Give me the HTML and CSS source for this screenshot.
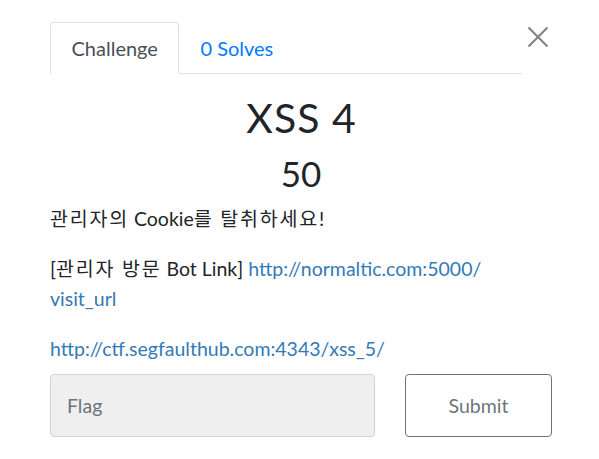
FILE: index.html
```html
<!DOCTYPE html>
<html lang="ko">
<head>
<meta charset="utf-8">
<link rel="stylesheet" href="styles.css">
</head>
<body>
<div class="modal">
  <div class="header">
    <ul class="tabs">
      <li class="tab active">Challenge</li>
      <li class="tab"><a href="#">0 Solves</a></li>
    </ul>
    <button class="close" aria-label="Close">
      <svg width="20" height="20" viewBox="0 0 20 20"><path d="M0.5 0.5 L19.5 19.5 M19.5 0.5 L0.5 19.5" stroke="#858585" stroke-width="2.2" fill="none"/></svg>
    </button>
  </div>
  <h1 class="title">XSS 4</h1>
  <h2 class="value">50</h2>
  <div class="desc">
    <p><span class="ko">관리자의</span> Cookie<span class="ko">를 탈취하세요</span>!</p>
    <p>[<span class="ko">관리자 방문</span> Bot Link] <a href="#">http://normaltic.com:5000/<br>visit_url</a></p>
    <p><a href="#">http://ctf.segfaulthub.com:4343/xss_5/</a></p>
  </div>
  <form class="form">
    <input class="flag" type="text" placeholder="Flag">
    <button class="submit" type="button">Submit</button>
  </form>
</div>
</body>
</html>
```
FILE: styles.css
```css
* { box-sizing: border-box; }
body {
  margin: 0;
  background: #fff;
  font-family: Lato, "Noto Sans CJK KR", sans-serif;
  color: #212529;
}
.modal {
  width: 502px;
  margin-left: 50px;
  padding-top: 22px;
}
.header {
  display: flex;
  align-items: flex-start;
}
.tabs {
  list-style: none;
  margin: 0;
  padding: 0;
  width: 472px;
  display: flex;
  border-bottom: 1px solid #dee2e6;
}
.tab {
  font-size: 20px;
  line-height: 30px;
  padding: 10px 20px 10px 20.5px;
  margin-bottom: -1px;
  border: 1px solid transparent;
  border-radius: 4px 4px 0 0;
}
.tab.active {
  color: #495057;
  border-color: #dee2e6 #dee2e6 #fff;
  background: #fff;
}
.tab a {
  color: #007bff;
  text-decoration: none;
}
.close {
  margin: 5px 0 0 6px;
  padding: 0;
  border: 0;
  background: none;
  width: 20px;
  height: 20px;
}
.close svg { display: block; }
.title {
  margin: 19px 0 0;
  text-align: center;
  font-size: 41px;
  font-weight: 400;
  line-height: 49px;
  letter-spacing: 1px;
  text-indent: 1px;
}
.value {
  margin: 10px 0 0;
  text-align: center;
  font-size: 35px;
  font-weight: 400;
  line-height: 42px;
}
.desc {
  margin-top: 10px;
  font-size: 19.5px;
  line-height: 30px;
}
.desc p { margin: 0 0 20px; }
.desc p:last-child { margin-bottom: 10px; }
.ko { letter-spacing: 1.8px; }
.desc a {
  color: #337ab7;
  text-decoration: none;
}
.form {
  display: flex;
  gap: 30px;
}
.flag {
  width: 325px;
  height: 63px;
  border: 1px solid #ced4da;
  border-radius: 4px;
  background: #efefef;
  padding: 0 16px;
  font-family: Lato, sans-serif;
  font-size: 19.5px;
  color: #495057;
}
.flag::placeholder { color: #6c757d; }
.submit {
  width: 147px;
  height: 63px;
  border: 1px solid #6c757d;
  border-radius: 4px;
  background: #fff;
  color: #6c757d;
  font-family: Lato, sans-serif;
  font-size: 19.5px;
}
```
